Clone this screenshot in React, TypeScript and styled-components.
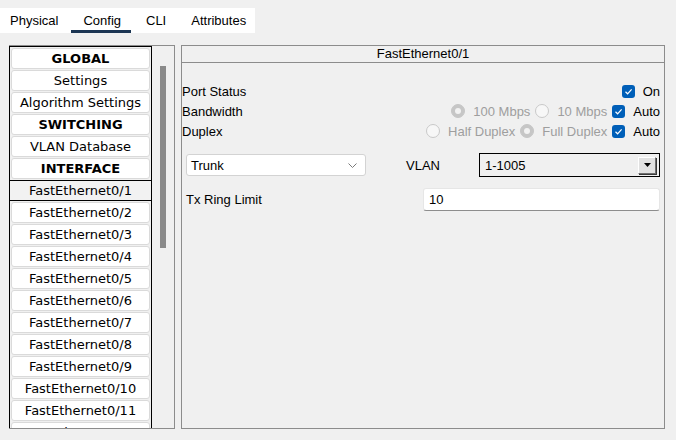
import React from "react";
import styled, { createGlobalStyle } from "styled-components";

const GlobalStyle = createGlobalStyle`
  body {
    margin: 0;
    background: #f0f0f0;
    font-family: "Liberation Sans", Arial, sans-serif;
    font-size: 13px;
    color: #000;
  }
`;

const Page = styled.div`
  width: 676px;
  height: 440px;
  background: #f0f0f0;
  padding-top: 8px;
  box-sizing: border-box;
  overflow: hidden;
`;

const TabBar = styled.div`
  width: 255px;
  height: 25px;
  background: #fff;
  display: flex;
  align-items: stretch;
  gap: 25px;
  padding-left: 10px;
  box-sizing: border-box;
`;

const Tab = styled.div<{ $active?: boolean }>`
  position: relative;
  display: flex;
  align-items: center;
  padding-bottom: 1px;
  &::after {
    content: "";
    display: ${(p) => (p.$active ? "block" : "none")};
    position: absolute;
    left: -12px;
    right: -10px;
    bottom: 0;
    height: 3px;
    background: #1b3553;
  }
`;

const Body = styled.div`
  display: flex;
  align-items: flex-start;
  gap: 6px;
  margin-top: 12px;
  padding-left: 9px;
  height: 384px;
`;

const LeftPanel = styled.div`
  width: 166px;
  height: 384px;
  box-sizing: border-box;
  border: 1px solid #8c8c8c;
  border-left: none;
  display: flex;
  overflow: hidden;
`;

const List = styled.div`
  width: 143px;
  height: 100%;
  box-sizing: border-box;
  border: 1px solid #000;
  border-bottom: none;
  padding: 1px;
  display: flex;
  flex-direction: column;
  gap: 1px;
  flex-shrink: 0;
  overflow: hidden;
`;

const Item = styled.div<{ $bold?: boolean; $selected?: boolean }>`
  height: 21px;
  flex-shrink: 0;
  box-sizing: border-box;
  display: flex;
  align-items: center;
  justify-content: center;
  font-family: "DejaVu Sans", Verdana, sans-serif;
  font-size: 13px;
  font-weight: ${(p) => (p.$bold ? 700 : 400)};
  white-space: nowrap;
  background: ${(p) => (p.$selected ? "#f2f2f2" : "#fff")};
  border: 1px solid ${(p) => (p.$selected ? "#000" : "#dadada")};
  border-radius: ${(p) => (p.$selected ? "0" : "3px")};
  margin: ${(p) => (p.$selected ? "0 -2px" : "0")};
`;

const Track = styled.div`
  flex: 1;
  padding: 20px 0 0 8px;
`;

const Thumb = styled.div`
  width: 6px;
  height: 182px;
  background: #8a8a8a;
`;

const RightPanel = styled.div`
  width: 484px;
  height: 384px;
  box-sizing: border-box;
  border: 1px solid #8c8c8c;
  display: flex;
  flex-direction: column;
`;

const Header = styled.div`
  height: 17px;
  box-sizing: border-box;
  border-bottom: 1px solid #8c8c8c;
  display: flex;
  align-items: center;
  justify-content: center;
  padding-bottom: 1px;
`;

const StatusBlock = styled.div`
  padding: 18px 4px 0 0;
  display: flex;
  flex-direction: column;
`;

const StatusRow = styled.div`
  height: 20px;
  display: flex;
  align-items: center;
  justify-content: space-between;
`;

const Options = styled.div`
  display: flex;
  align-items: center;
`;

const Opt = styled.label<{ $disabled?: boolean }>`
  display: flex;
  align-items: center;
  gap: 8px;
  margin-left: 5px;
  color: ${(p) => (p.$disabled ? "#9e9e9e" : "#000")};
`;

const CheckBox = styled.span`
  width: 13px;
  height: 13px;
  border-radius: 3px;
  background: #005fb8;
  display: flex;
  align-items: center;
  justify-content: center;
`;

const Radio = styled.span<{ $on?: boolean }>`
  width: 14px;
  height: 14px;
  box-sizing: border-box;
  border-radius: 50%;
  background: ${(p) => (p.$on ? "#c6c6c6" : "#f7f7f7")};
  border: 1px solid ${(p) => (p.$on ? "#c6c6c6" : "#c9c9c9")};
  display: flex;
  align-items: center;
  justify-content: center;
  &::after {
    content: "";
    display: ${(p) => (p.$on ? "block" : "none")};
    width: 6px;
    height: 6px;
    border-radius: 50%;
    background: #f2f2f2;
  }
`;

const FormBlock = styled.div`
  padding: 12px 4px 0 4px;
  display: flex;
  flex-direction: column;
  gap: 10px;
`;

const FormRow = styled.div`
  height: 24px;
  display: flex;
  align-items: center;
`;

const Select = styled.div`
  width: 180px;
  height: 22px;
  box-sizing: border-box;
  background: #fff;
  border: 1px solid #d3d3d3;
  border-radius: 3px;
  display: flex;
  align-items: center;
  justify-content: space-between;
  padding: 0 8px 0 4px;
`;

const FieldLabel = styled.span<{ $gap?: number }>`
  margin-left: ${(p) => p.$gap ?? 0}px;
`;

const Combo = styled.div`
  width: 181px;
  height: 24px;
  margin-left: auto;
  box-sizing: border-box;
  border: 1px solid #000;
  background: #f0f0f0;
  display: flex;
  align-items: center;
  justify-content: space-between;
  padding: 0 3px 0 5px;
`;

const ComboButton = styled.span`
  width: 18px;
  height: 17px;
  box-sizing: border-box;
  background: #e1e1e1;
  border-top: 1px solid #fff;
  border-left: 1px solid #fff;
  border-right: 1px solid #6f6f6f;
  border-bottom: 1px solid #6f6f6f;
  box-shadow: 1px 1px 0 #3a3a3a;
  display: flex;
  align-items: center;
  justify-content: center;
`;

const TextInput = styled.div`
  width: 237px;
  height: 23px;
  margin-left: auto;
  box-sizing: border-box;
  background: #fff;
  border: 1px solid #e6e6e6;
  border-bottom: 1px solid #8d8d8d;
  border-radius: 3px;
  display: flex;
  align-items: center;
  padding-left: 5px;
`;

const Check = () => (
  <CheckBox>
    <svg width="9" height="9" viewBox="0 0 9 9">
      <path d="M1.5 4.8 L3.6 6.8 L7.6 2.4" fill="none" stroke="#fff" strokeWidth="1.2" />
    </svg>
  </CheckBox>
);

const sideItems: { label: string; bold?: boolean; selected?: boolean }[] = [
  { label: "GLOBAL", bold: true },
  { label: "Settings" },
  { label: "Algorithm Settings" },
  { label: "SWITCHING", bold: true },
  { label: "VLAN Database" },
  { label: "INTERFACE", bold: true },
  { label: "FastEthernet0/1", selected: true },
  ...Array.from({ length: 11 }, (_, i) => ({ label: `FastEthernet0/${i + 2}` })),
];

export default function App() {
  return (
    <Page>
      <GlobalStyle />
      <TabBar>
        <Tab>Physical</Tab>
        <Tab $active>Config</Tab>
        <Tab>CLI</Tab>
        <Tab>Attributes</Tab>
      </TabBar>
      <Body>
        <LeftPanel>
          <List>
            {sideItems.map((it) => (
              <Item key={it.label} $bold={it.bold} $selected={it.selected}>
                {it.label}
              </Item>
            ))}
          </List>
          <Track>
            <Thumb />
          </Track>
        </LeftPanel>
        <RightPanel>
          <Header>FastEthernet0/1</Header>
          <StatusBlock>
            <StatusRow>
              <span>Port Status</span>
              <Options>
                <Opt>
                  <Check />
                  On
                </Opt>
              </Options>
            </StatusRow>
            <StatusRow>
              <span>Bandwidth</span>
              <Options>
                <Opt $disabled>
                  <Radio $on />
                  100 Mbps
                </Opt>
                <Opt $disabled>
                  <Radio />
                  10 Mbps
                </Opt>
                <Opt>
                  <Check />
                  Auto
                </Opt>
              </Options>
            </StatusRow>
            <StatusRow>
              <span>Duplex</span>
              <Options>
                <Opt $disabled>
                  <Radio />
                  Half Duplex
                </Opt>
                <Opt $disabled>
                  <Radio $on />
                  Full Duplex
                </Opt>
                <Opt>
                  <Check />
                  Auto
                </Opt>
              </Options>
            </StatusRow>
          </StatusBlock>
          <FormBlock>
            <FormRow>
              <Select>
                <span>Trunk</span>
                <svg width="9" height="5" viewBox="0 0 9 5">
                  <path d="M0.5 0.5 L4.5 4.5 L8.5 0.5" fill="none" stroke="#7a7a7a" strokeWidth="1" />
                </svg>
              </Select>
              <FieldLabel $gap={40}>VLAN</FieldLabel>
              <Combo>
                <span>1-1005</span>
                <ComboButton>
                  <svg width="7" height="4" viewBox="0 0 7 4">
                    <path d="M0 0 H7 L3.5 4 Z" fill="#000" />
                  </svg>
                </ComboButton>
              </Combo>
            </FormRow>
            <FormRow>
              <span>Tx Ring Limit</span>
              <TextInput>10</TextInput>
            </FormRow>
          </FormBlock>
        </RightPanel>
      </Body>
    </Page>
  );
}
